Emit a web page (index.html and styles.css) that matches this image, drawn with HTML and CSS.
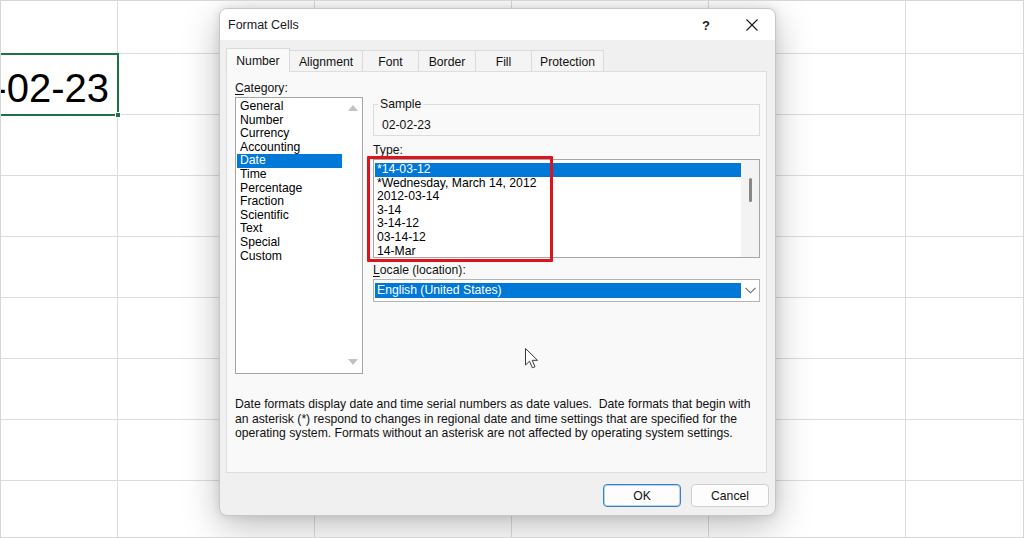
FILE: index.html
```html
<!DOCTYPE html>
<html lang="en">
<head>
<meta charset="utf-8">
<title>Format Cells</title>
<link rel="stylesheet" href="styles.css">
</head>
<body>
<div class="sheet">
  <div class="cell-sel"><span>02-02-23</span><i class="handle"></i></div>
</div>

<div class="dialog">
  <div class="titlebar">
    <span class="title">Format Cells</span>
    <span class="tb-btn help">?</span>
    <span class="tb-btn close">
      <svg width="12" height="12" viewBox="0 0 12 12"><path d="M0.5 0.5 L11.5 11.5 M11.5 0.5 L0.5 11.5" stroke="#1a1a1a" stroke-width="1.1" fill="none"/></svg>
    </span>
  </div>

  <div class="tabs">
    <div class="tab active">Number</div>
    <div class="tab">Alignment</div>
    <div class="tab">Font</div>
    <div class="tab">Border</div>
    <div class="tab">Fill</div>
    <div class="tab">Protection</div>
  </div>

  <div class="panel">
    <div class="cols">
      <div class="leftcol">
        <div class="lbl"><u>C</u>ategory:</div>
        <div class="listbox cat">
          <ul class="items">
            <li>General</li>
            <li>Number</li>
            <li>Currency</li>
            <li>Accounting</li>
            <li class="sel">Date</li>
            <li>Time</li>
            <li>Percentage</li>
            <li>Fraction</li>
            <li>Scientific</li>
            <li>Text</li>
            <li>Special</li>
            <li>Custom</li>
          </ul>
          <div class="vscroll">
            <svg width="10" height="6" viewBox="0 0 10 6"><path d="M0 6 L5 0 L10 6 Z" fill="#c2c2c2"/></svg>
            <svg width="10" height="6" viewBox="0 0 10 6"><path d="M0 0 L5 6 L10 0 Z" fill="#c2c2c2"/></svg>
          </div>
        </div>
      </div>

      <div class="rightcol">
        <fieldset class="sample">
          <legend>Sample</legend>
          <div class="sample-val">02-02-23</div>
        </fieldset>

        <div class="lbl type-lbl"><u>T</u>ype:</div>
        <div class="typewrap">
          <div class="listbox type">
            <ul class="items">
              <li class="sel">*14-03-12</li>
              <li>*Wednesday, March 14, 2012</li>
              <li>2012-03-14</li>
              <li>3-14</li>
              <li>3-14-12</li>
              <li>03-14-12</li>
              <li>14-Mar</li>
            </ul>
            <div class="tscroll"><span class="thumb"></span></div>
          </div>
          <div class="annot"></div>
        </div>

        <div class="lbl locale-lbl"><u>L</u>ocale (location):</div>
        <div class="combo">
          <div class="combo-val">English (United States)</div>
          <div class="combo-btn">
            <svg width="11" height="7" viewBox="0 0 11 7"><path d="M0.5 0.8 L5.5 5.8 L10.5 0.8" stroke="#6a6a6a" stroke-width="1.1" fill="none"/></svg>
          </div>
        </div>
      </div>
    </div>

    <p class="desc">Date formats display date and time serial numbers as date values.&nbsp; Date formats that begin with<br>an asterisk (*) respond to changes in regional date and time settings that are specified for the<br>operating system. Formats without an asterisk are not affected by operating system settings.</p>
  </div>

  <div class="footer">
    <button class="btn ok">OK</button>
    <button class="btn">Cancel</button>
  </div>
</div>

<svg class="cursor" width="14" height="22" viewBox="0 0 14 22"><path d="M0.5 0.5 L0.5 17 L4.5 13.2 L7.4 19.8 L10 18.7 L7.2 12.3 L12.5 12.3 Z" fill="#fff" stroke="#3a3a3a" stroke-width="1" stroke-linejoin="round"/></svg>
</body>
</html>
```

FILE: styles.css
```css
* { box-sizing: border-box; }

html, body { margin: 0; padding: 0; }

body {
  width: 1024px;
  height: 538px;
  overflow: hidden;
  position: relative;
  border: 1px solid #d6d6d6;
  background-color: #fff;
  background-image:
    linear-gradient(to right, #dcdcdc 1px, transparent 1px),
    linear-gradient(to bottom, #dcdcdc 1px, transparent 1px);
  background-size: 197px 100%, 100% 61px;
  background-position: 117px 0, 0 53px;
  font-family: "Liberation Sans", Arial, sans-serif;
  color: #000;
}

/* spreadsheet */
.sheet {
  display: grid;
  grid-template-columns: 117px repeat(5, 197px) 1fr;
  grid-template-rows: 53px repeat(8, 61px);
  height: 100%;
}

.cell-sel {
  grid-column: 1;
  grid-row: 2;
  position: relative;
  margin: -1px -1px -1px -4px;
  border: 2px solid #1f7244;
  display: flex;
  justify-content: flex-end;
  align-items: center;
  padding: 7px 8px 0 0;
  font: 40px "Liberation Sans", Arial, sans-serif;
  white-space: nowrap;
}

.handle {
  position: absolute;
  right: -4px;
  bottom: -4px;
  width: 6px;
  height: 6px;
  background: #1f7244;
  border: 1px solid #fff;
}

/* dialog */
.dialog {
  position: absolute;
  left: 218px;
  top: 7px;
  width: 557px;
  height: 508px;
  background: #f0f0f0;
  border: 1px solid #c6c6c6;
  border-radius: 8px;
  box-shadow: 0 10px 36px rgba(0, 0, 0, .26), 0 0 10px rgba(0, 0, 0, .10);
  display: flex;
  flex-direction: column;
  overflow: hidden;
  font-size: 12.2px;
}

.titlebar {
  height: 31px;
  flex: none;
  background: #fff;
  display: flex;
  align-items: center;
  padding-left: 8px;
}

.title { flex: 1; font-size: 12.5px; color: #1a1a1a; }

.tb-btn {
  width: 46px;
  height: 31px;
  display: flex;
  align-items: center;
  justify-content: center;
}

.help { font-size: 13px; font-weight: 700; color: #222; padding-top: 1px; }

/* tabs */
.tabs {
  display: flex;
  align-items: flex-end;
  padding: 8px 0 0 6px;
  flex: none;
}

.tab {
  height: 21px;
  border: 1px solid #dadada;
  border-bottom: none;
  margin-right: -1px;
  background: #f4f4f4;
  display: flex;
  align-items: center;
  justify-content: center;
  padding-top: 1px;
  color: #111;
}

.tab.active {
  height: 24px;
  margin-bottom: -1px;
  background: #f9f9f9;
  position: relative;
  z-index: 1;
  padding-top: 0;
}

.tab:nth-child(1) { width: 64px; }
.tab:nth-child(2) { width: 74px; }
.tab:nth-child(3) { width: 57px; }
.tab:nth-child(4) { width: 58px; }
.tab:nth-child(5) { width: 57px; }
.tab:nth-child(6) { width: 73px; }

/* panel */
.panel {
  margin-left: 6px;
  width: 541px;
  height: 402px;
  flex: none;
  background: #f9f9f9;
  border: 1px solid #dedede;
  padding: 8px 0 0 8px;
}

.cols { display: flex; gap: 10px; }

.leftcol { width: 128px; }

.lbl { line-height: 16px; height: 16px; color: #111; }
.lbl u { text-underline-offset: 2px; }

.listbox {
  background: #fff;
  border: 1px solid #a5a5a5;
  display: flex;
}

.items {
  list-style: none;
  margin: 0;
  flex: 1;
}

.items li {
  height: 13.6px;
  line-height: 13.6px;
  white-space: nowrap;
  color: #000;
}

.items li.sel { background: #0078d7; color: #fff; }

.cat {
  height: 277px;
  margin-top: 1px;
}

.cat .items { padding: 2px 1px 1px; }
.cat .items li { padding-left: 3px; }

.vscroll {
  width: 19px;
  display: flex;
  flex-direction: column;
  justify-content: space-between;
  align-items: center;
  padding: 7px 0 8px;
}

.rightcol { width: 387px; padding-top: 16px; }

.sample {
  margin: 0;
  border: 1px solid #dcdcdc;
  padding: 5px 4px 2px 4px;
}

.sample legend {
  padding: 0 2px;
  line-height: 16px;
  color: #111;
}

.sample-val { line-height: 16px; padding-left: 4px; color: #111; }

.type-lbl { margin-top: 6px; }

.typewrap { position: relative; margin-top: 1px; }

.type { height: 99px; }
.type .items { padding: 3px 0 0 1px; }
.type .items li { padding-left: 2px; }

.tscroll {
  width: 18px;
  background: #f3f3f3;
  display: flex;
  justify-content: center;
  padding-top: 18px;
}

.thumb {
  width: 3px;
  height: 24px;
  border-radius: 2px;
  background: #878787;
}

.annot {
  position: absolute;
  left: -6px;
  top: -3px;
  width: 186px;
  height: 106px;
  border: 3px solid #e0121b;
  border-radius: 1px;
  pointer-events: none;
}

.locale-lbl { margin-top: 4px; }

.combo {
  margin-top: 1px;
  height: 23px;
  border: 1px solid #b4b4b4;
  background: #fff;
  display: flex;
  padding: 3px 0 3px 1px;
}

.combo-val {
  flex: 1;
  background: #0078d7;
  color: #fff;
  line-height: 15px;
  padding-left: 2px;
}

.combo-btn {
  width: 18px;
  display: flex;
  align-items: center;
  justify-content: center;
}

.desc {
  margin: 23px 0 0;
  line-height: 14.5px;
  color: #111;
  white-space: nowrap;
}

/* footer */
.footer {
  display: flex;
  justify-content: flex-end;
  gap: 10px;
  padding: 11px 6px 0 0;
}

.btn {
  width: 78px;
  height: 23px;
  border: 1px solid #d0d0d0;
  border-radius: 4px;
  background: #fdfdfd;
  font: 12.2px "Liberation Sans", Arial, sans-serif;
  color: #111;
  padding: 0;
}

.btn.ok {
  border-color: #3a7fc6;
  box-shadow: inset 0 0 0 1px rgba(58, 127, 198, .35);
}

.cursor {
  position: absolute;
  left: 524px;
  top: 347px;
}
```
